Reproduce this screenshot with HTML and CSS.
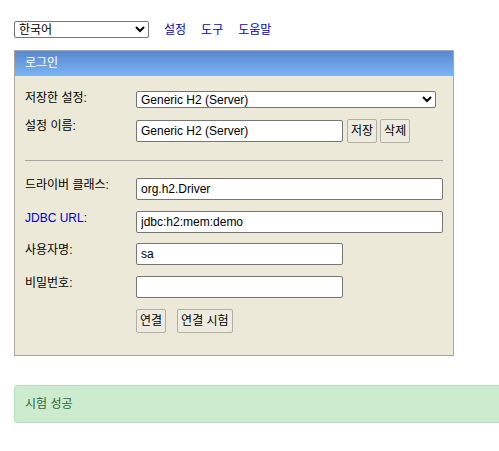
FILE: index.html
```html
<!DOCTYPE html>
<html lang="ko">
<head>
<meta charset="utf-8">
<title>H2 Console</title>
<link rel="stylesheet" href="styles.css">
</head>
<body>
<form class="login-form">
  <div class="topbar">
    <select class="lang-select">
      <option>한국어</option>
    </select>
    <a class="nav-link" href="#">설정</a>
    <a class="nav-link" href="#">도구</a>
    <a class="nav-link" href="#">도움말</a>
  </div>

  <div class="panel">
    <div class="panel-head">로그인</div>
    <div class="panel-body">
      <div class="row">
        <div class="label">저장한 설정:</div>
        <select class="setting-select">
          <option>Generic H2 (Server)</option>
        </select>
      </div>
      <div class="row row-center">
        <div class="label label-top">설정 이름:</div>
        <input class="field field-short" type="text" value="Generic H2 (Server)">
        <button type="button" class="btn btn-first">저장</button>
        <button type="button" class="btn btn-next">삭제</button>
      </div>
      <hr class="divider">
      <div class="row row-after-hr">
        <div class="label">드라이버 클래스:</div>
        <input class="field field-long" type="text" value="org.h2.Driver">
      </div>
      <div class="row">
        <div class="label"><a class="help-link" href="#">JDBC URL</a>:</div>
        <input class="field field-long" type="text" value="jdbc:h2:mem:demo">
      </div>
      <div class="row row-tight">
        <div class="label">사용자명:</div>
        <input class="field field-short" type="text" value="sa">
      </div>
      <div class="row">
        <div class="label">비밀번호:</div>
        <input class="field field-short" type="password" value="">
      </div>
      <div class="row">
        <div class="label"></div>
        <button type="button" class="btn">연결</button>
        <button type="button" class="btn btn-spaced">연결 시험</button>
      </div>
    </div>
  </div>

  <div class="alert-success">시험 성공</div>
</form>
</body>
</html>
```

FILE: styles.css
```css
body {
  margin: 8px 0 8px 14px;
  background: #ffffff;
  color: #000000;
  font-family: "Liberation Sans", Arial, "Noto Sans CJK KR", sans-serif;
  font-size: 12px;
}

.login-form {
  margin: 0;
}

.topbar {
  display: flex;
  align-items: center;
  height: 17px;
  margin: 13px 0 12px;
}

.lang-select {
  width: 135px;
  height: 17px;
  margin: 0;
  font-family: inherit;
  font-size: 12px;
  border: 1px solid #767676;
  border-radius: 2px;
  background: #ffffff;
  color: #000000;
  box-sizing: border-box;
}

.nav-link {
  margin-left: 15px;
  color: #0000cc;
  text-decoration: none;
  line-height: 14px;
}

.panel {
  width: 438px;
  border: 1px solid #aca899;
  background: #ece9d8;
}

.panel-head {
  height: 25px;
  line-height: 24px;
  padding-left: 10px;
  color: #ffffff;
  background: linear-gradient(to bottom, #5888d2, #7db5f1);
}

.panel-body {
  padding: 15px 10px 22px;
}

.row {
  display: flex;
  align-items: flex-start;
  margin-top: 11px;
}

.row:first-child {
  margin-top: 0;
}

.row-center {
  align-items: center;
}

.row-center .label-top {
  align-self: flex-start;
}

.row-tight {
  margin-top: 10px;
}

.divider {
  border: 0;
  border-top: 1px solid #a8a8a8;
  height: 0;
  margin: 17px 0 0;
}

.row.row-after-hr {
  margin-top: 17px;
}

.label {
  width: 111px;
  flex: none;
  line-height: 14px;
  color: #000000;
}

.help-link {
  color: #0000cc;
  text-decoration: none;
}

.setting-select {
  width: 300px;
  height: 17px;
  margin: 0;
  font-family: inherit;
  font-size: 12px;
  border: 1px solid #767676;
  border-radius: 2px;
  background: #ffffff;
  color: #000000;
  box-sizing: border-box;
}

.field {
  height: 22px;
  margin: 0;
  padding: 1px 4px;
  border: 1px solid #767676;
  border-radius: 2px;
  background: #ffffff;
  color: #000000;
  font-family: inherit;
  font-size: 12px;
  box-sizing: border-box;
}

.field-long {
  width: 307px;
}

.field-short {
  width: 207px;
}

.btn {
  height: 24px;
  margin: 0;
  padding: 0 3px;
  border: 1px solid #b3afa2;
  border-radius: 2px;
  background: #eeece1;
  color: #000000;
  font-family: inherit;
  font-size: 12px;
  line-height: 14px;
  box-sizing: border-box;
}

.btn-first {
  margin-left: 4px;
}

.btn-next {
  margin-left: 3px;
}

.btn-spaced {
  margin-left: 11px;
}

.alert-success {
  margin-top: 29px;
  padding: 11px 10px;
  line-height: 14px;
  color: #2b6535;
  background: #cdeccf;
  border: 1px solid #b8dfbb;
  border-right: 0;
  border-radius: 4px 0 0 4px;
}
```
